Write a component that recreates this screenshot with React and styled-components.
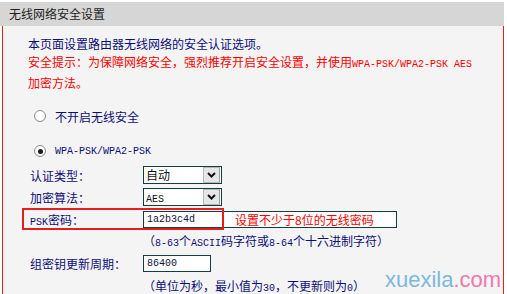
import styled, {createGlobalStyle} from "styled-components";

const GlobalStyle = createGlobalStyle`
  html, body {
    margin: 0;
    padding: 0;
    background: #fff;
  }
  body {
    font-family: "Noto Sans CJK SC", "Liberation Sans", sans-serif;
    font-size: 12px;
  }
`;

export default function App() {
  return (
    <Page>
      <GlobalStyle />
      <Header>无线网络安全设置</Header>
      <Body>
        <Intro>
          本页面设置路由器无线网络的安全认证选项。
          <br />
          <Warn>
            安全提示：为保障网络安全，强烈推荐开启安全设置，并使用<Code>WPA-PSK/WPA2-PSK AES</Code>
            <br />
            加密方法。
          </Warn>
        </Intro>

        <RadioRow $top={14}>
          <Radio />
          <span>不开启无线安全</span>
        </RadioRow>
        <RadioRow $top={15}>
          <Radio $checked />
          <Code>WPA-PSK/WPA2-PSK</Code>
        </RadioRow>

        <FormRow $top={3}>
          <Label>认证类型：</Label>
          <Select>
            <SelectText>自动</SelectText>
            <ArrowBtn>
              <Chevron />
            </ArrowBtn>
          </Select>
        </FormRow>
        <FormRow>
          <Label>加密算法：</Label>
          <Select>
            <SelectText>
              <Code>AES</Code>
            </SelectText>
            <ArrowBtn>
              <Chevron />
            </ArrowBtn>
          </Select>
        </FormRow>
        <FormRow>
          <Mark />
          <Label>
            <Code>PSK</Code>密码：
          </Label>
          <TextBox $w={254}>
            <Value>1a2b3c4d</Value>
            <Note>设置不少于8位的无线密码</Note>
          </TextBox>
        </FormRow>
        <HintRow>
          （<Code>8-63</Code>个<Code>ASCII</Code>码字符或<Code>8-64</Code>个十六进制字符）
        </HintRow>
        <FormRow>
          <Label>组密钥更新周期：</Label>
          <TextBox $w={68}>
            <Value>86400</Value>
          </TextBox>
        </FormRow>
        <HintRow $top={1}>
          （单位为秒，最小值为<Code>30</Code>，不更新则为<Code>0</Code>）
        </HintRow>
      </Body>
      <Watermark>
        xuexila<Pink>.com</Pink>
      </Watermark>
    </Page>
  );
}

function Chevron() {
  return (
    <svg width="9" height="6" viewBox="0 0 9 6">
      <path d="M1 1 L4.5 4.5 L8 1" fill="none" stroke="#111" strokeWidth="2" />
    </svg>
  );
}

const Page = styled.div`
  position: relative;
  width: 507px;
  height: 294px;
  overflow: hidden;
  padding-top: 2px;
  box-sizing: border-box;
`;

const Header = styled.div`
  width: 504px;
  height: 24px;
  padding-left: 9px;
  box-sizing: border-box;
  background: #d6d6d6;
  color: #1e1e1e;
  line-height: 24px;
`;

const Body = styled.div`
  width: 502px;
  height: 268px;
  margin-left: 2px;
  padding: 9px 0 0 25px;
  box-sizing: border-box;
  background: #f4f4f4;
  border-left: 1px solid #e3201b;
  border-right: 1px solid #e3201b;
  color: #0d0d7a;
`;

const Intro = styled.div`
  line-height: 18px;
  white-space: nowrap;
`;

const Warn = styled.span`
  color: #ff0000;
`;

const Code = styled.span`
  font-family: "Liberation Mono", "DejaVu Sans Mono", monospace;
  font-size: 10px;
`;

const RadioRow = styled.div`
  height: 20px;
  margin: ${p => p.$top}px 0 0 6px;
  display: flex;
  align-items: center;
  gap: 9px;
`;

const Radio = styled.span`
  position: relative;
  width: 12px;
  height: 12px;
  border-radius: 50%;
  box-sizing: border-box;
  border: 1px solid #8c8c8c;
  background: radial-gradient(circle at 50% 40%, #fff 55%, #e6e6e6 100%);

  &::after {
    content: "";
    display: ${p => (p.$checked ? "block" : "none")};
    position: absolute;
    left: 2.5px;
    top: 2.5px;
    width: 5px;
    height: 5px;
    border-radius: 50%;
    background: #1a1a1a;
  }
`;

const FormRow = styled.div`
  position: relative;
  height: 22px;
  margin-top: ${p => p.$top || 0}px;
  display: flex;
  align-items: center;
`;

const Label = styled.div`
  width: 113px;
  padding-left: 2px;
  box-sizing: border-box;
  flex-shrink: 0;
  margin-right: 2px;
`;

const Mark = styled.div`
  position: absolute;
  left: -6px;
  top: 0;
  width: 202px;
  height: 22px;
  box-sizing: border-box;
  border: 2px solid #e41d1d;
  z-index: 2;
`;

const Select = styled.div`
  width: 79px;
  height: 18px;
  box-sizing: border-box;
  border: 1px solid #163d3d;
  background: #fff;
  display: flex;
`;

const SelectText = styled.div`
  flex: 1;
  padding-left: 2px;
  line-height: 16px;
  color: #111;
`;

const ArrowBtn = styled.div`
  width: 17px;
  margin: 0 1px 0 0;
  box-sizing: border-box;
  border: 1px solid #b8b8b8;
  border-right-color: #9a9a9a;
  background: #e6e6e6;
  display: flex;
  align-items: center;
  justify-content: center;
`;

const TextBox = styled.div`
  width: ${p => p.$w}px;
  height: 17px;
  padding-left: 3px;
  box-sizing: border-box;
  border: 1px solid #163d3d;
  background: #fff;
  display: flex;
  align-items: center;
`;

const Value = styled.span`
  width: 88px;
  flex-shrink: 0;
  font-family: "Liberation Mono", "DejaVu Sans Mono", monospace;
  font-size: 10px;
  color: #12123a;
`;

const Note = styled.span`
  color: #ff0000;
  font-size: 12px;
  line-height: 15px;
`;

const HintRow = styled.div`
  height: 22px;
  margin-top: ${p => p.$top || 0}px;
  padding: 3px 0 0 115px;
  box-sizing: border-box;
  line-height: 16px;
  white-space: nowrap;
`;

const Watermark = styled.div`
  position: absolute;
  left: 385px;
  top: 267px;
  font-family: "Liberation Sans", Arial, sans-serif;
  font-size: 22px;
  line-height: 26px;
  color: #7db8dd;
`;

const Pink = styled.span`
  color: #f279aa;
`;
